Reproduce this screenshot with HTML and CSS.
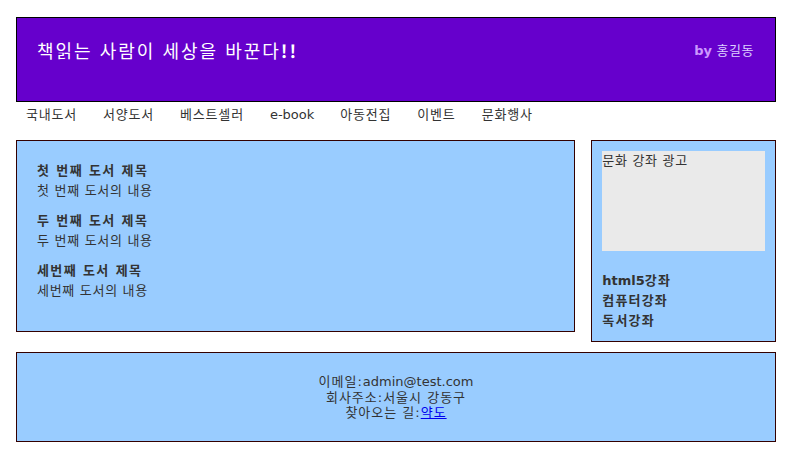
FILE: index.html
```html
<!DOCTYPE html>
<html lang="ko">
  <head>
    <meta charset="UTF-8" />
    <title>책읽는 사람이 세상을 바꾼다</title>
    <link rel="stylesheet" href="styles.css">
  </head>
  <body>
    <div class="wrap">
      <header class="top">
        <h1 class="top-title">책읽는 사람이 세상을 바꾼다<b>!!</b></h1>
        <div class="top-by"><b>by</b> 홍길동</div>
      </header>

      <nav class="menu">
        <a href="#">국내도서</a>
        <a href="#">서양도서</a>
        <a href="#">베스트셀러</a>
        <a href="#" class="latin">e-book</a>
        <a href="#">아동전집</a>
        <a href="#">이벤트</a>
        <a href="#">문화행사</a>
      </nav>

      <div class="main">
        <section class="books">
          <div class="book">
            <h3>첫 번째 도서 제목</h3>
            <p>첫 번째 도서의 내용</p>
          </div>
          <div class="book">
            <h3>두 번째 도서 제목</h3>
            <p>두 번째 도서의 내용</p>
          </div>
          <div class="book">
            <h3>세번째 도서 제목</h3>
            <p>세번째 도서의 내용</p>
          </div>
        </section>

        <aside class="side">
          <div class="ad">문화 강좌 광고</div>
          <ul class="lectures">
            <li><span class="latin">html5</span>강좌</li>
            <li>컴퓨터강좌</li>
            <li>독서강좌</li>
          </ul>
        </aside>
      </div>

      <footer class="bottom">
        이메일:<span class="latin">admin@test.com</span><br>
        회사주소:서울시 강동구<br>
        찾아오는 길:<a href="#">약도</a>
      </footer>
    </div>
  </body>
</html>
```

FILE: styles.css
```css
* {
  margin: 0;
  padding: 0;
  box-sizing: border-box;
}

body {
  font-family: 'DejaVu Sans', 'Noto Sans CJK KR', sans-serif;
  font-size: 13px;
  color: #333;
  background: #fff;
  letter-spacing: 0.7px;
}

.latin {
  letter-spacing: 0;
}

.wrap {
  width: 760px;
  margin: 17px 0 0 16px;
}

.top {
  height: 85px;
  background: #6600cc;
  border: 1px solid #000;
  display: flex;
  justify-content: space-between;
  align-items: flex-start;
  padding: 19px 21px 0 20px;
  color: #fff;
}

.top-title {
  font-size: 18px;
  font-weight: normal;
  letter-spacing: 2px;
  font-family: 'Noto Sans CJK KR', sans-serif;
}

.top-by {
  color: #ddd0ff;
  font-size: 13px;
  padding-top: 3px;
  letter-spacing: 0.5px;
}

.top-by b {
  color: #cc99ff;
  letter-spacing: 0;
}

.menu {
  display: flex;
  gap: 26px;
  padding: 3px 0 0 10px;
  height: 38px;
}

.menu a {
  color: #333;
  text-decoration: none;
  font-size: 13px;
  line-height: 20px;
  letter-spacing: 0.8px;
}

.menu a.latin {
  letter-spacing: 0;
}

.main {
  display: flex;
  align-items: flex-start;
  gap: 16px;
}

.books {
  width: 560px;
  height: 192px;
  background: #99ccff;
  border: 1px solid #330000;
  padding: 20px;
}

.book {
  margin-bottom: 10px;
}

.book h3 {
  font-size: 13px;
  line-height: 20px;
  letter-spacing: 1.4px;
}

.book p {
  line-height: 20px;
}

.side {
  width: 185px;
  height: 202px;
  background: #99ccff;
  border: 1px solid #330000;
  padding: 10px;
}

.ad {
  background: #eaeaea;
  height: 100px;
  line-height: 20px;
}

.lectures {
  list-style: none;
  margin-top: 20px;
  font-weight: bold;
  letter-spacing: 1.2px;
}

.lectures li {
  line-height: 20px;
}

.bottom {
  margin-top: 10px;
  height: 90px;
  background: #99ccff;
  border: 1px solid #330000;
  text-align: center;
  padding-top: 21px;
  line-height: 15.5px;
  letter-spacing: 1px;
}

.bottom a {
  color: #0000ee;
}
```
